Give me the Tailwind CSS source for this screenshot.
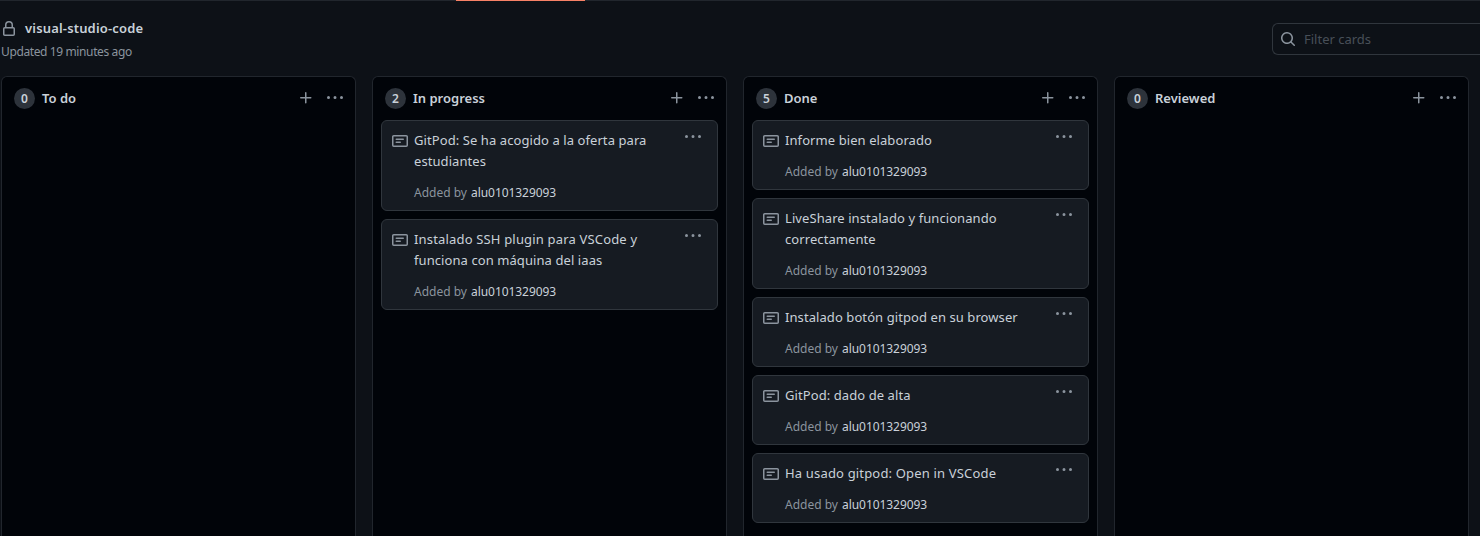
<!DOCTYPE html>
<html lang="en">
<head>
<meta charset="utf-8">
<title>visual-studio-code</title>
<script src="https://cdn.jsdelivr.net/npm/@tailwindcss/browser@4"></script>
</head>
<body class="h-[536px] w-[1480px] overflow-hidden bg-[#0d1117] font-['Noto_Sans',sans-serif] text-[13px] text-[#c9d1d9]">
<svg class="hidden">
<symbol id="lock" viewBox="0 0 16 16"><path fill-rule="evenodd" d="M4 4v2h-.25A1.75 1.75 0 002 7.75v5.5c0 .966.784 1.75 1.75 1.75h8.5A1.75 1.75 0 0014 13.25v-5.5A1.75 1.75 0 0012.25 6H12V4a4 4 0 10-8 0zm6.5 2V4a2.5 2.5 0 10-5 0v2h5zM12 7.5h.25a.25.25 0 01.25.25v5.5a.25.25 0 01-.25.25h-8.5a.25.25 0 01-.25-.25v-5.5a.25.25 0 01.25-.25H12z"/></symbol>
<symbol id="search" viewBox="0 0 16 16"><path fill-rule="evenodd" d="M11.5 7a4.499 4.499 0 11-8.998 0A4.499 4.499 0 0111.5 7zm-.82 4.74a6 6 0 111.06-1.06l3.04 3.04a.75.75 0 11-1.06 1.06l-3.04-3.04z"/></symbol>
<symbol id="plus" viewBox="0 0 16 16"><path d="M7.75 2a.75.75 0 01.75.75V7h4.25a.75.75 0 110 1.5H8.5v4.25a.75.75 0 11-1.5 0V8.5H2.75a.75.75 0 010-1.5H7V2.75A.75.75 0 017.75 2z"/></symbol>
<symbol id="dots" viewBox="0 0 16 16"><path d="M8 9a1.5 1.5 0 100-3 1.5 1.5 0 000 3zM1.5 9a1.5 1.5 0 100-3 1.5 1.5 0 000 3zm13 0a1.5 1.5 0 100-3 1.5 1.5 0 000 3z"/></symbol>
<symbol id="note" viewBox="0 0 16 16"><path fill-rule="evenodd" d="M0 3.75C0 2.784.784 2 1.75 2h12.5c.966 0 1.75.784 1.75 1.75v8.5A1.75 1.75 0 0114.25 14H1.75A1.75 1.75 0 010 12.25v-8.5zm1.75-.25a.25.25 0 00-.25.25v8.5c0 .138.112.25.25.25h12.5a.25.25 0 00.25-.25v-8.5a.25.25 0 00-.25-.25H1.75zM3.5 6.25a.75.75 0 01.75-.75h7a.75.75 0 010 1.5h-7a.75.75 0 01-.75-.75zm.75 2.25a.75.75 0 000 1.5h4a.75.75 0 000-1.5h-4z"/></symbol>
</svg>
<div class="h-px bg-[#21262d]"><div class="ml-[456px] h-px w-[129px] bg-[#f78166]"></div></div>
<header class="flex h-[75px] justify-between">
  <div class="pt-[17px] pl-px">
    <h1 class="flex h-[21px] items-center gap-2 font-semibold tracking-[0.17px]"><svg class="size-4 fill-[#8b949e]"><use href="#lock"/></svg><span>visual-studio-code</span></h1>
    <p class="mt-1 text-[12px] leading-[18px] tracking-[-0.38px] text-[#8b949e]">Updated 19 minutes ago</p>
  </div>
  <div class="mt-[22px] flex h-8 w-[208px] items-center gap-2 rounded-l-md border border-r-0 border-[#30363d] pl-[7px] text-[#484f58]"><svg class="size-4 fill-[#8b949e]"><use href="#search"/></svg><span class="pt-0.5">Filter cards</span></div>
</header>
<main id="board" class="flex h-[480px] gap-4 pl-px"></main>
<script>
const columns = [
  ['To do', []],
  ['In progress', [['GitPod: Se ha acogido a la oferta para', 'estudiantes'], ['Instalado SSH plugin para VSCode y', 'funciona con máquina del iaas']]],
  ['Done', [['Informe bien elaborado'], ['LiveShare instalado y funcionando', 'correctamente'], ['Instalado botón gitpod en su browser'], ['GitPod: dado de alta'], ['Ha usado gitpod: Open in VSCode']]],
  ['Reviewed', []],
];
const line = t => `<span class="block ${t.includes('VSCode') ? 'tracking-[0.17px]' : 'tracking-[0.08px]'}">${t}</span>`;
const card = lines => `
  <article class="flex rounded-md border border-[#30363d] bg-[#161b22] pt-[9px] pr-4 pb-[7px] pl-[10px]">
    <svg class="mt-[3px] mr-[6px] size-4 shrink-0 fill-[#8b949e]"><use href="#note"/></svg>
    <div class="grow whitespace-nowrap"><p class="leading-[21px]">${lines.map(line).join('')}</p><p class="mt-[11px] text-[12px] leading-5 text-[#8b949e]">Added by <span class="ml-px tracking-[-0.07px] text-[#c9d1d9]">alu0101329093</span></p></div>
    <svg class="-mt-px size-4 shrink-0 fill-[#8b949e]"><use href="#dots"/></svg>
  </article>`;
document.getElementById('board').innerHTML = columns.map(([name, cards]) => `
  <section class="w-[355px] shrink-0 rounded-t-md border border-b-0 border-[#21262d] bg-[#010409] px-2">
    <header class="flex h-[43px] items-center pr-1 pl-1">
      <span class="mr-[7px] flex size-[21px] items-center justify-center rounded-full bg-[#2d333b] text-[12px] font-semibold">${cards.length}</span>
      <h2 class="grow font-semibold">${name}</h2>
      <svg class="mr-[13px] mb-0.5 size-4 fill-[#8b949e]"><use href="#plus"/></svg>
      <svg class="mb-0.5 size-4 fill-[#8b949e]"><use href="#dots"/></svg>
    </header>
    <div class="flex flex-col gap-2">${cards.map(card).join('')}</div>
  </section>`).join('');
</script>
</body>
</html>
